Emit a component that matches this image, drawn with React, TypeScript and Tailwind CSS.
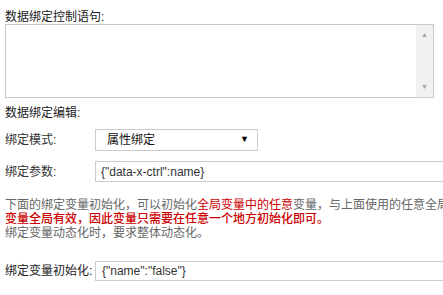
export default function App() {
  return (
    <div className="w-[443px] h-[295px] overflow-hidden bg-white">
      <div
        className="w-[700px] pl-[5px] pt-[10px] text-[12px] text-[#222]"
        style={{ fontFamily: '"Liberation Sans", "Noto Sans CJK SC", sans-serif' }}
      >
        {/* Control statement */}
        <div className="leading-[14px]">数据绑定控制语句:</div>
        <div className="flex w-[429px] h-[74px] border border-[#c8c8c8] bg-white">
          <div className="flex-1" />
          <div className="w-[17px] bg-[#f1f1f1] flex flex-col items-center justify-between py-[6px] text-[7px] leading-[8px] text-[#a3a3a3]">
            <span>▲</span>
            <span>▼</span>
          </div>
        </div>

        {/* Edit section */}
        <div className="mt-[8px] leading-[14px]">数据绑定编辑:</div>

        <div className="mt-[9px] flex items-center">
          <div className="w-[90px] text-[#333]">绑定模式:</div>
          <div className="w-[163px] h-[22px] border border-[#cccccc] flex items-center justify-between pl-[11px] pr-[8px] text-[#111]">
            <span>属性绑定</span>
            <span className="text-[9px] text-black">▼</span>
          </div>
        </div>

        <div className="mt-[10px] flex items-center">
          <div className="w-[90px] text-[#333]">绑定参数:</div>
          <div className="w-[400px] h-[21px] border border-[#cccccc] flex items-center pl-[5px] text-[#333]">
            {'{"data-x-ctrl":name}'}
          </div>
        </div>

        {/* Notes */}
        <div className="mt-[16px] leading-[14px] text-[#666] whitespace-nowrap">
          <div>
            下面的绑定变量初始化，可以初始化
            <span className="text-[#cc0000]">全局变量中的任意</span>
            变量，与上面使用的任意全局变量相同。
          </div>
          <div className="text-[#cc0000] font-medium">变量全局有效，因此变量只需要在任意一个地方初始化即可。</div>
          <div>绑定变量动态化时，要求整体动态化。</div>
        </div>

        <div className="mt-[21px] flex items-center">
          <div className="w-[90px] text-[#222]">绑定变量初始化:</div>
          <div className="w-[400px] h-[20px] border border-[#cccccc] flex items-center pl-[6px] text-[#333]">
            {'{"name":"false"}'}
          </div>
        </div>
      </div>
    </div>
  );
}
